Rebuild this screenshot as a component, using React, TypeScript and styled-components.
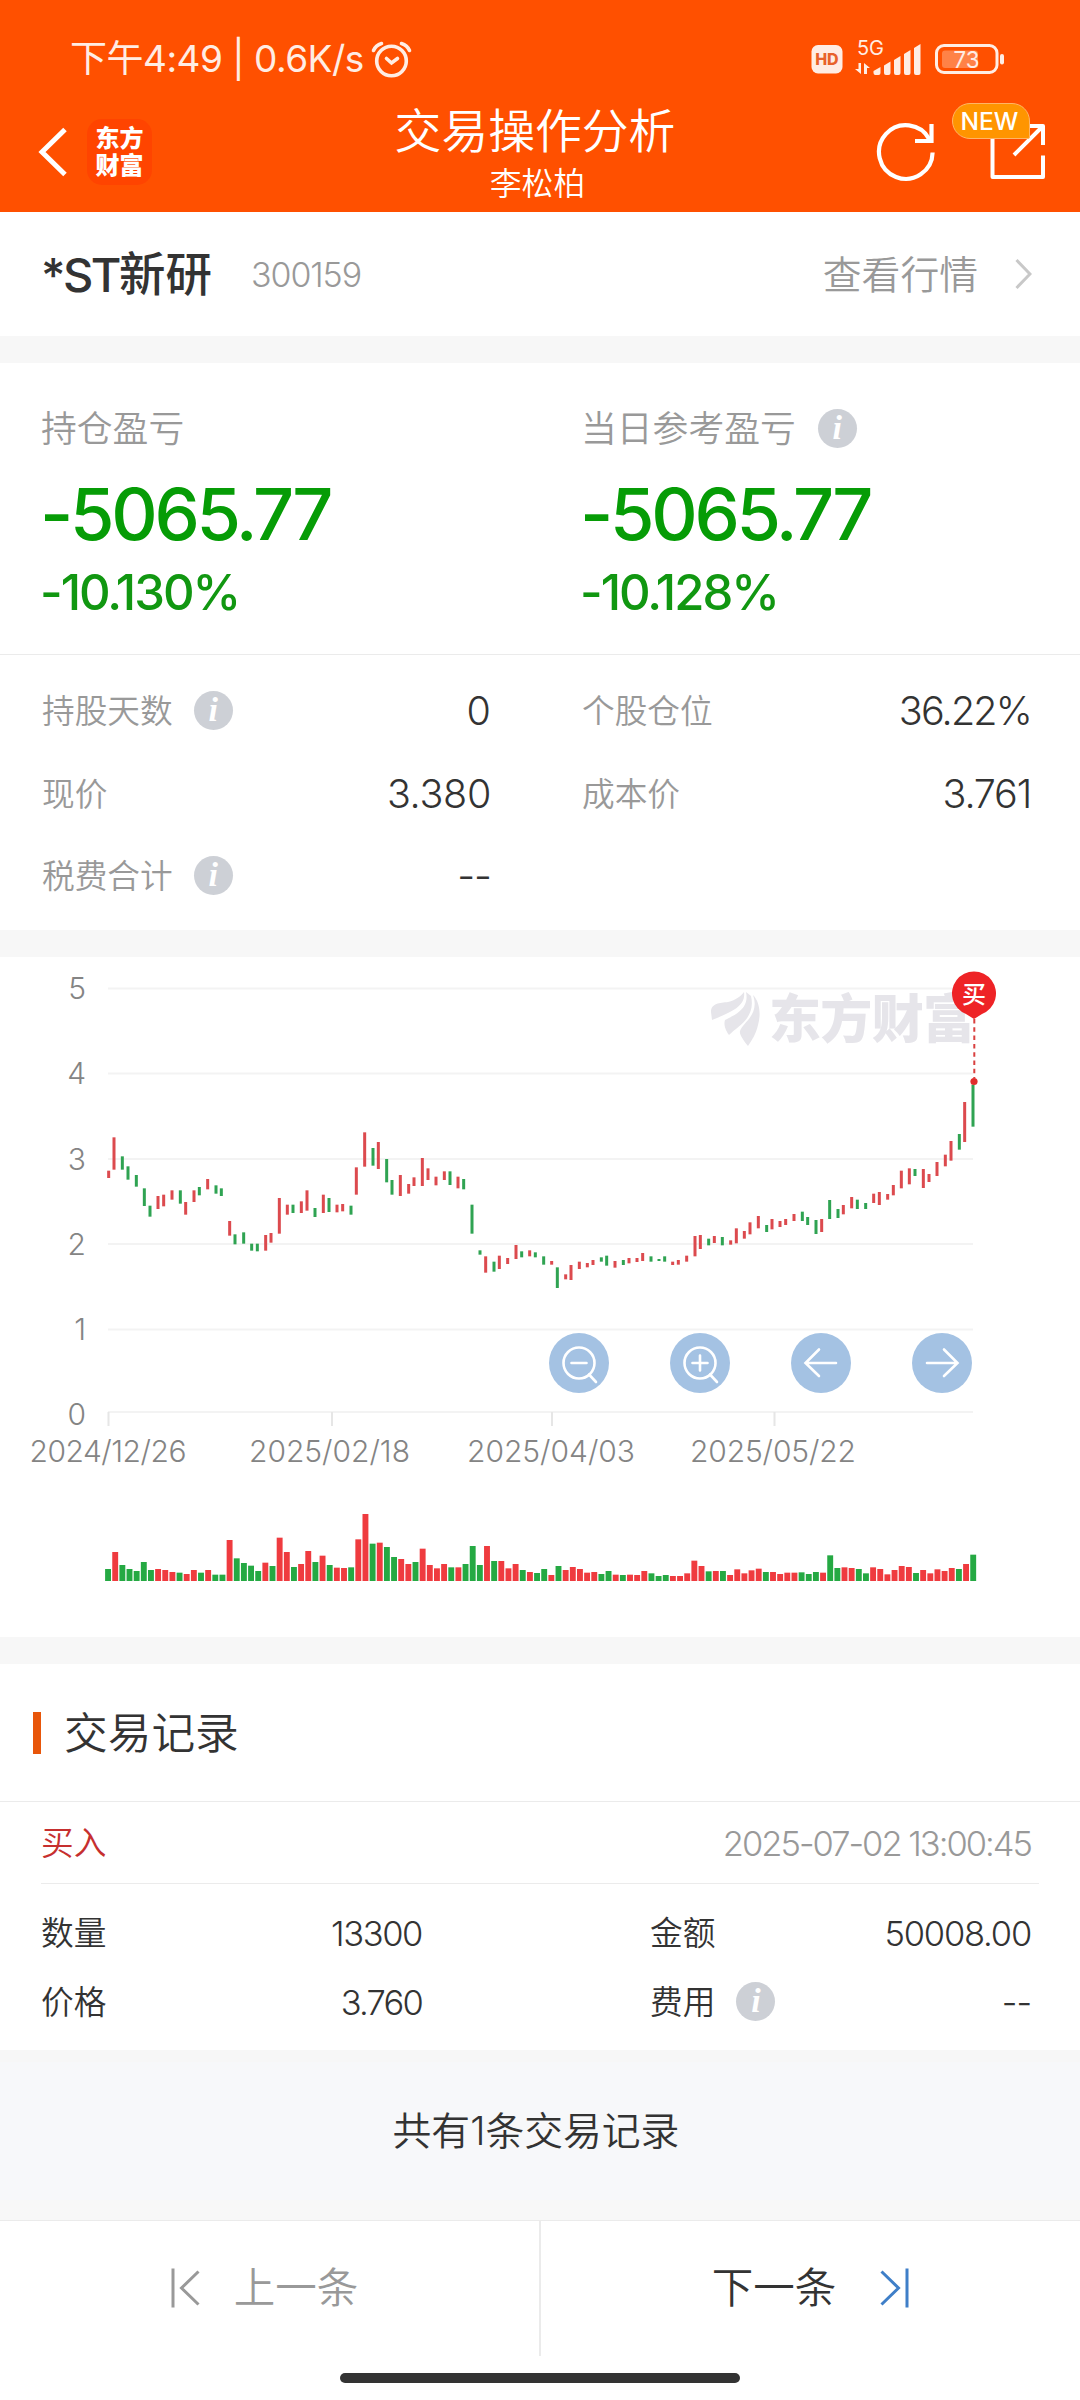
import React from "react";
import styled, { createGlobalStyle } from "styled-components";

const FONT = 'Inter, "Noto Sans CJK SC", "Noto Sans", sans-serif';

const GlobalStyle = createGlobalStyle`
  * { box-sizing: border-box; }
  body { margin: 0; background: #fff; }
  #root { width: 1080px; }
`;

const Page = styled.div`
  width: 1080px;
  height: 2400px;
  display: flex;
  flex-direction: column;
  background: #fff;
  color: #333;
  font-family: ${FONT};
  font-weight: 300;
  overflow: hidden;
`;

const Text = styled.span<{ $size: number; $gap?: number; $color?: string; $weight?: number }>`
  display: inline-block;
  padding-top: 3px;
  font-size: ${(p) => p.$size}px;
  letter-spacing: ${(p) => p.$gap ?? 0}px;
  color: ${(p) => p.$color ?? "#333"};
  font-weight: ${(p) => p.$weight ?? 300};
  line-height: 1.2;
  white-space: nowrap;
`;

/* ---------- header ---------- */

const Header = styled.header`
  height: 212px;
  flex: none;
  background: #ff5000;
  display: flex;
  flex-direction: column;
`;

const StatusBar = styled.div`
  height: 100px;
  padding: 16px 74px 0 70px;
  display: flex;
  align-items: center;
  justify-content: space-between;
`;

const StatusGroup = styled.div`
  display: flex;
  align-items: center;
  gap: 6px;
`;

const NavBar = styled.div`
  height: 112px;
  display: grid;
  grid-template-columns: 300px 1fr 300px;
`;

const NavLeft = styled.div`
  display: flex;
  align-items: center;
  padding: 0 0 8px 37px;
  gap: 17px;
`;

const Logo = styled.div`
  width: 65px;
  height: 66px;
  border-radius: 15px;
  background: #ff4400;
  color: #fff;
  display: flex;
  flex-direction: column;
  align-items: center;
  justify-content: center;
  font-size: 24px;
  line-height: 27px;
  font-weight: 900;
`;

const NavTitle = styled.div`
  display: flex;
  flex-direction: column;
  align-items: center;
`;

const Title = styled(Text)`
  line-height: 56px;
  margin: 0 0 0 -10px;
`;

const SubTitle = styled(Text)`
  line-height: 44px;
  margin-left: -5px;
`;

const NavRight = styled.div`
  position: relative;
  display: flex;
  justify-content: flex-end;
  padding-right: 33px;
  gap: 53px;
`;

const NewBadge = styled.div`
  position: absolute;
  left: 172px;
  top: 3px;
  width: 78px;
  height: 36px;
  border-radius: 18px 18px 2px 18px;
  background: #ff9500;
  border: 1px solid #ffb566;
  color: #fff;
  font: 500 24.5px/34px ${FONT};
  text-align: center;
  padding-right: 3px;
`;

/* ---------- stock summary ---------- */

const StockRow = styled.div`
  height: 124px;
  flex: none;
  padding: 0 48px 0 41px;
  display: flex;
  align-items: center;
`;

const StockName = styled.div`
  display: flex;
  margin-right: 39px;
`;

const Push = styled.div`
  flex: 1;
`;

const QuoteLink = styled.div`
  display: flex;
  align-items: center;
  gap: 36px;
`;

const Band = styled.div`
  height: 27px;
  flex: none;
  background: #f7f7f7;
`;

const Summary = styled.section`
  height: 292px;
  flex: none;
  display: grid;
  grid-template-columns: 1fr 1fr;
  border-bottom: 1px solid #ebebeb;
`;

const SummaryCell = styled.div`
  padding: 40px 0 0 41px;
  display: flex;
  flex-direction: column;
`;

const SummaryLabel = styled.div`
  height: 50px;
  display: flex;
  align-items: center;
  gap: 22px;
`;

const Amount = styled(Text)`
  line-height: 84px;
  margin: 16px 0 0 -1px;
`;

const Percent = styled(Text)`
  line-height: 60px;
  margin: 4px 0 0 -1px;
`;

const InfoDot = styled.span`
  width: 39px;
  height: 39px;
  border-radius: 50%;
  background: #cdd0d6;
  color: #fff;
  font: italic 700 34px/37px "Liberation Serif", serif;
  text-align: center;
  flex: none;
`;

const Details = styled.section`
  height: 275px;
  flex: none;
  display: grid;
  grid-template-columns: 1fr 1fr;
  grid-auto-rows: 82.5px;
  padding-top: 14px;
`;

const DetailCell = styled.div`
  padding: 0 49px 0 42px;
  display: flex;
  align-items: center;
`;

const LabelGroup = styled.div`
  display: flex;
  align-items: center;
  gap: 21px;
`;

/* ---------- chart ---------- */

const ChartPanel = styled.section`
  position: relative;
  height: 680px;
  flex: none;
`;

const ChartSvg = styled.svg`
  display: block;
`;

const ChartTools = styled.div`
  position: absolute;
  left: 549px;
  top: 376px;
  display: flex;
  gap: 61px;
`;

const ToolButton = styled.button`
  width: 60px;
  height: 60px;
  padding: 0;
  border: 0;
  border-radius: 50%;
  background: #a4c2e3;
  display: flex;
`;

/* ---------- records ---------- */

const RecordsHead = styled.div`
  height: 138px;
  flex: none;
  padding-left: 33px;
  display: flex;
  align-items: center;
  gap: 23px;
  border-bottom: 1px solid #ebebeb;
`;

const Accent = styled.div`
  width: 8px;
  height: 42px;
  background: #e8560a;
`;

const RecordTop = styled.div`
  height: 82px;
  flex: none;
  margin: 0 41px;
  padding: 0 8px 0 0;
  display: flex;
  align-items: center;
  justify-content: space-between;
  border-bottom: 1px solid #ebebeb;
`;

const RecordGrid = styled.div`
  height: 166px;
  flex: none;
  padding: 14px 49px 0 41px;
  display: grid;
  grid-template-columns: 381px 381px;
  grid-auto-rows: 69px;
  justify-content: space-between;
`;

const RecordCell = styled.div`
  display: flex;
  align-items: center;
  justify-content: space-between;
`;

const Total = styled.div`
  height: 170px;
  flex: none;
  padding: 0 8px 2px 0;
  background: #f7f8fa;
  border-top: 12px solid #f7f7f7;
  border-bottom: 20px solid #f8f8f8;
  display: flex;
  align-items: center;
  justify-content: center;
`;

/* ---------- pager ---------- */

const Pager = styled.nav`
  height: 136px;
  flex: none;
  border-top: 1px solid #ebebeb;
  display: grid;
  grid-template-columns: 539px 541px;
`;

const PagerItem = styled.div<{ $divided?: boolean; $gap: number }>`
  display: flex;
  align-items: center;
  justify-content: center;
  gap: ${(p) => p.$gap}px;
  padding: 0 ${(p) => (p.$divided ? 0 : 10)}px 2px 0;
  border-left: ${(p) => (p.$divided ? "2px solid #ebebeb" : "0")};
`;

const HomeBar = styled.div`
  width: 400px;
  height: 10px;
  margin: 17px auto 0;
  border-radius: 5px;
  background: #333;
`;

/* ---------- data ---------- */

type Candle = [number, number, number, "r" | "g"];

const parse = (s: string, dx: number, dy: number): Candle[] =>
  s
    .trim()
    .split(/\s+/)
    .map((t) => {
      const [x, a, b, c] = t.split(",");
      return [dx + +x / 3, dy + +a / 3, dy + +b / 3, c as "r" | "g"];
    });

const CANDLES: Candle[] = [
  ...parse(
    `56,272,294,r 72,172,269,r 97,229,269,g 114,259,299,g 139,285,320,g 163,325,378,g 180,377,410,g 204,348,387,r
     221,344,379,r 246,331,359,r 271,331,371,g 287,366,404,r 312,331,366,r 328,321,346,g 353,297,328,r 378,316,341,g
     394,325,348,g 419,423,467,r 435,463,493,g 461,457,491,g 485,491,512,g 502,491,514,g 527,465,512,r 543,459,488,r
     568,354,461,r 592,374,404,r 609,374,399,g 634,364,399,r 651,331,392,r 675,384,411,g 700,344,399,r 717,354,396,g
     741,374,397,r 758,372,394,r 783,377,404,g 799,262,344,r 824,157,260,r 849,204,257,g 865,186,267,r 890,237,307,g
     906,300,344,g 931,285,348,r 956,312,341,r 972,292,318,r`,
    90,
    1080,
  ),
  ...parse(
    `67,234,318,r 84,265,300,r 108,290,316,r 133,274,300,r 150,274,315,g 174,290,325,r 191,297,328,g 216,374,461,g
     240,511,524,g 257,529,578,r 282,545,575,g 298,527,567,r 323,534,552,r 348,495,537,r 365,514,532,g 389,511,529,r
     406,517,532,g 431,529,554,g 455,543,554,r 472,562,624,g 497,583,598,r 513,555,600,r 538,545,567,r 562,549,562,r
     579,540,555,r 604,532,545,g 620,527,557,g 645,543,563,r 670,540,555,g 687,534,550,r 711,534,546,r 728,519,543,r
     753,529,545,g 777,537,543,g 794,529,545,g 818,545,555,r 835,540,554,r 860,527,545,r 885,468,529,r 901,465,507,r
     926,476,496,g 943,468,489,r 967,471,496,g`,
    400,
    1080,
  ),
  ...parse(
    `152,841,854,r 169,805,850,r 193,813,836,r 210,787,823,r 235,768,805,r 260,795,816,g 276,777,808,r 300,783,801,r
     317,777,795,r 342,762,783,r 367,755,783,g 383,771,795,g 408,780,822,g 425,777,816,r 449,720,777,g 474,747,774,g
     490,735,763,r 515,711,745,r 532,719,747,g 557,729,747,g 581,701,729,r 598,696,735,r 623,702,719,r 640,675,706,r
     664,632,685,r 688,625,673,r 705,627,648,g 730,627,684,r 747,642,666,r 771,606,648,r 796,584,619,r 813,543,602,r
     838,522,569,g 854,426,546,r 879,374,500,g`,
    680,
    960,
  ),
];

const VOLUMES = `g237 r186 g225 g237 g243 g216 g240 r237 r240 r246 g248 r252 r240 g248 r240 g254 g254 r150 g205 g219 g227
  g243 r218 g228 r143 r186 g231 r222 r183 g216 r197 g225 r233 r234 g232 r148 r72 g161 r158 g171 g201 r207 r222 g216
  r176 r225 r235 r222 g232 r232 g222 g168 g225 r168 g213 r213 r235 r222 g240 r246 g249
  g237 r255 g228 r240 r231 r237 r248 r246 g252 g243 r254 g255 r254 r255 r243 g250 g258 g255 r258 r258 r250 r212 r228
  g244 r243 g243 r255 r238 r250 r241 r236 g246 r246 r252 r248 r248 g247 g252 g246 r248 g196 g234 r232 r234 g237 g250
  r232 r237 r253 r240 r228 r231 g249 r240 r250 r238 r243 r234 g237 r222 g194`
  .trim()
  .split(/\s+/);

const GRID: [string, number][] = [
  ["5", 988.5],
  ["4", 1073.5],
  ["3", 1159],
  ["2", 1244],
  ["1", 1329.5],
  ["0", 1412],
];

const DATES: [string, number, number, number][] = [
  ["2024/12/26", 108.5, 108, 157],
  ["2025/02/18", 332, 329.5, 161],
  ["2025/04/03", 552, 551, 168],
  ["2025/05/22", 774.5, 773, 166],
];

/* ---------- icons ---------- */

const AlarmIcon = () => (
  <svg width="42" height="40" viewBox="370 38 42 40" fill="none" stroke="#ffede4" strokeWidth="3.6" strokeLinecap="round">
    <circle cx="391.5" cy="61" r="14.8" />
    <path d="M373.5 50.5C375 47 378 44.500 381.500 43.500M409.500 50.500C408 47 405 44.500 401.500 43.500M386.500 58.500l5 4.500l6-4.500" />
  </svg>
);

const StatusIcons = () => (
  <svg width="196" height="52" viewBox="810 32 196 52">
    <rect x="811.500" y="45" width="31" height="28.500" rx="6.500" fill="#ffede4" />
    <text x="826.900" y="65" fontFamily="Inter" fontWeight="800" fontSize="16" textAnchor="middle" fill="#e8622a">HD</text>
    <text x="857" y="55" fontFamily="Inter" fontWeight="400" fontSize="20" textLength="27" fill="#ffede4">5G</text>
    <path d="M861 63v11l-6-5h3.500v-6zM864 74V63l6 5h-3v6z" fill="#ffede4" />
    <path
      d="M873.500 71l7-4v6q0 2-2 2h-3q-2 0-2-2zM884 65.500l6.500-4v11.500q0 2-2 2h-2.500q-2 0-2-2zM894 60l6.500-4v17q0 2-2 2h-2.500q-2 0-2-2zM904 54l6.500-4v23q0 2-2 2h-2.500q-2 0-2-2zM914 48l6.500-4v29q0 2-2 2h-2.500q-2 0-2-2z"
      fill="#ffede4"
    />
    <rect x="936.500" y="45.500" width="60.500" height="27" rx="7.500" fill="none" stroke="#ffede4" strokeWidth="3" />
    <rect x="942" y="50.500" width="36" height="17.500" rx="3" fill="#ff8247" />
    <rect x="1000" y="54" width="4" height="10.500" rx="2" fill="#ffede4" />
    <text x="966.500" y="68" fontFamily="Inter" fontWeight="400" fontSize="23.500" textLength="26" lengthAdjust="spacingAndGlyphs" textAnchor="middle" fill="#ffede4">73</text>
  </svg>
);

const BackIcon = () => (
  <svg width="33" height="56" viewBox="37 124 33 56" fill="none" stroke="#fff" strokeWidth="5">
    <path d="M65 129.500L42 152L65 174.500" />
  </svg>
);

const RefreshIcon = () => (
  <svg width="62" height="112" viewBox="875 100 62 112" fill="none" stroke="#fff" strokeWidth="4.200">
    <path d="M932.600 152.500A26.800 26.800 0 1 1 929.500 139.500" />
    <path d="M931.500 124V141H915" />
  </svg>
);

const ShareIcon = () => (
  <svg width="57" height="112" viewBox="990 100 57 112" fill="none" stroke="#fff" strokeWidth="4" strokeLinejoin="round">
    <path d="M992.500 130V177H1043V155.500M1026 126H1043V145M1043 126L1014 155" />
  </svg>
);

const SmallChevron = () => (
  <svg width="18" height="34" viewBox="1014 256 18 34" fill="none" stroke="#c8c8c8" strokeWidth="3">
    <path d="M1016.500 259L1030 273L1016.500 287" />
  </svg>
);

const ToolIcon = ({ d, lens }: { d: string; lens?: boolean }) => (
  <svg width="60" height="60" viewBox="0 0 60 60" fill="none" stroke="#fff" strokeWidth="2.600" strokeLinecap="round">
    {lens && <circle cx="30" cy="30" r="15.500" />}
    <path d={d} />
  </svg>
);

const PagerIcon = ({ color, flip }: { color: string; flip?: boolean }) => (
  <svg width="30" height="40" viewBox="0 0 30 40" fill="none" stroke={color} strokeWidth="3">
    <path d={flip ? "M28 .5V39.500M2.500 3.500L19.500 20L2.500 36.500" : "M2 .5V39.500M27.500 3.500L10.500 20L27.500 36.500"} />
  </svg>
);

/* ---------- chart drawing ---------- */

const Chart = () => (
  <ChartSvg width="1080" height="680" viewBox="0 957 1080 680">
    {GRID.map(([label, y]) => (
      <g key={label}>
        <rect x="108" y={y - 1} width="865" height="2" fill="#f3f3f3" />
        <text x="86" y={y + (label === "0" ? 12.5 : 10.5)} textAnchor="end" fontFamily={FONT} fontWeight="350" fontSize="30" fill="#848484">
          {label}
        </text>
      </g>
    ))}
    {DATES.map(([label, tick, cx, width]) => (
      <g key={label}>
        <rect x={tick - 1} y="1412" width="2" height="14" fill="#e6e6e6" />
        <text x={cx} y="1461.500" textAnchor="middle" fontFamily={FONT} fontWeight="350" fontSize="30" textLength={width} fill="#848484">
          {label}
        </text>
      </g>
    ))}
    <g fill="#e6e5ea">
      <path d="M711 1012C711 1003 720 1003 728 1002C736 1000 741 996 744 992C746 1006 732 1012 712 1020Z" />
      <path d="M746 992C750 1010 732 1016 725 1020C723 1026 727 1032 729 1035C738 1026 756 1018 751 996Z" />
      <path d="M753 995C760 1002 761 1015 758 1025C756 1034 752 1040 748 1046C744 1041 739 1034 740 1031C743 1022 760 1015 753 995Z" />
      <text x="769" y="1038" fontFamily='"Noto Sans CJK SC"' fontWeight="900" fontSize="52" textLength="206">
        东方财富
      </text>
    </g>
    {CANDLES.map(([x, a, b, c]) => (
      <rect key={x} x={x - 1.5} y={a} width="3" height={b - a} fill={c === "r" ? "#dc4a4e" : "#2fa352"} />
    ))}
    {VOLUMES.map((v, i) => {
      const top = 1490 + +v.slice(1) / 3;
      return (
        <rect key={i} x={105.1 + i * 7.15} y={top} width="5.900" height={1581 - top} fill={v[0] === "r" ? "#ef3b3f" : "#25a943"} />
      );
    })}
    <path d="M974.300 1019V1078" stroke="#d9403f" strokeWidth="2" strokeDasharray="4.500 3.800" />
    <circle cx="974" cy="1081.500" r="3.600" fill="#e02c2c" />
    <path d="M974 1019L966 1014A22 22 0 1 1 982 1014Z" fill="#ee2326" />
    <text x="974" y="1003" textAnchor="middle" fontFamily='"Noto Sans CJK SC"' fontWeight="500" fontSize="24" fill="#fff">
      买
    </text>
  </ChartSvg>
);

/* ---------- pieces ---------- */

const Label = ({ children, color, info }: { children: string; color: string; info?: boolean }) => (
  <LabelGroup>
    <Text $size={32.7} $color={color} $weight={350}>{children}</Text>
    {info && <InfoDot>i</InfoDot>}
  </LabelGroup>
);

const Detail = ({ label, info, value, gap }: { label: string; info?: boolean; value: string; gap?: number }) => (
  <DetailCell>
    <Label color="#999" info={info}>{label}</Label>
    <Push />
    <Text $size={39.5} $gap={gap}>{value}</Text>
  </DetailCell>
);

const Field = ({ label, info, value, gap }: { label: string; info?: boolean; value: string; gap: number }) => (
  <RecordCell>
    <Label color="#333" info={info}>{label}</Label>
    <Text $size={34.5} $gap={gap}>{value}</Text>
  </RecordCell>
);

export default function App() {
  return (
    <Page>
      <GlobalStyle />
      <Header>
        <StatusBar>
          <StatusGroup>
            <Text $size={37} $color="#ffede4" $weight={400} $gap={-0.5}>下午4:49 | 0.6K/s</Text>
            <AlarmIcon />
          </StatusGroup>
          <StatusIcons />
        </StatusBar>
        <NavBar>
          <NavLeft>
            <BackIcon />
            <Logo>
              <span>东方</span>
              <span>财富</span>
            </Logo>
          </NavLeft>
          <NavTitle>
            <Title $size={46.8} $color="#fff" $weight={350}>交易操作分析</Title>
            <SubTitle $size={31.8} $color="#fff" $weight={350}>李松柏</SubTitle>
          </NavTitle>
          <NavRight>
            <RefreshIcon />
            <ShareIcon />
            <NewBadge>NEW</NewBadge>
          </NavRight>
        </NavBar>
      </Header>

      <StockRow>
        <StockName>
          <Text $size={47} $weight={500} $gap={-2.5}>*ST</Text>
          <Text $size={46.5} $weight={500}>新研</Text>
        </StockName>
        <Text $size={34} $color="#999" $gap={-1.1}>300159</Text>
        <Push />
        <QuoteLink>
          <Text $size={38.8} $color="#999" $weight={350}>查看行情</Text>
          <SmallChevron />
        </QuoteLink>
      </StockRow>
      <Band />

      <Summary>
        <SummaryCell>
          <SummaryLabel>
            <Text $size={35.8} $color="#999" $weight={350}>持仓盈亏</Text>
          </SummaryLabel>
          <Amount $size={72} $color="#069c06" $weight={500} $gap={-3.3}>-5065.77</Amount>
          <Percent $size={49} $color="#119711" $weight={500} $gap={-2}>-10.130%</Percent>
        </SummaryCell>
        <SummaryCell>
          <SummaryLabel>
            <Text $size={35.8} $color="#999" $weight={350}>当日参考盈亏</Text>
            <InfoDot>i</InfoDot>
          </SummaryLabel>
          <Amount $size={72} $color="#069c06" $weight={500} $gap={-3.3}>-5065.77</Amount>
          <Percent $size={49} $color="#119711" $weight={500} $gap={-2}>-10.128%</Percent>
        </SummaryCell>
      </Summary>

      <Details>
        <Detail label="持股天数" info value="0" />
        <Detail label="个股仓位" value="36.22%" gap={-1.8} />
        <Detail label="现价" value="3.380" gap={-0.3} />
        <Detail label="成本价" value="3.761" gap={-1.2} />
        <Detail label="税费合计" info value="--" gap={-1} />
      </Details>
      <Band />

      <ChartPanel>
        <Chart />
        <ChartTools>
          <ToolButton><ToolIcon lens d="M22.500 30H37.500M40 41.500L47 49" /></ToolButton>
          <ToolButton><ToolIcon lens d="M22.500 30H37.500M30 22.500V37.500M40 41.500L47 49" /></ToolButton>
          <ToolButton><ToolIcon d="M45 30H15M28 16.500L14.500 30L28 43" /></ToolButton>
          <ToolButton><ToolIcon d="M15 30H45M32 16.500L45.500 30L32 43" /></ToolButton>
        </ChartTools>
      </ChartPanel>
      <Band />

      <RecordsHead>
        <Accent />
        <Text $size={43.7} $weight={350}>交易记录</Text>
      </RecordsHead>
      <RecordTop>
        <Text $size={32.7} $color="#c62f2f" $weight={350}>买入</Text>
        <Text $size={34.5} $color="#999" $gap={-2}>2025-07-02 13:00:45</Text>
      </RecordTop>
      <RecordGrid>
        <Field label="数量" value="13300" gap={-1.4} />
        <Field label="金额" value="50008.00" gap={-1.2} />
        <Field label="价格" value="3.760" gap={-1.8} />
        <Field label="费用" info value="--" gap={-1} />
      </RecordGrid>
      <Total>
        <Text $size={38.8} $weight={350}>共有1条交易记录</Text>
      </Total>

      <Pager>
        <PagerItem $gap={33}>
          <PagerIcon color="#999" />
          <Text $size={41.5} $color="#999" $weight={350}>上一条</Text>
        </PagerItem>
        <PagerItem $divided $gap={43}>
          <Text $size={41.5} $weight={350}>下一条</Text>
          <PagerIcon color="#3f7fc8" flip />
        </PagerItem>
      </Pager>
      <HomeBar />
    </Page>
  );
}
